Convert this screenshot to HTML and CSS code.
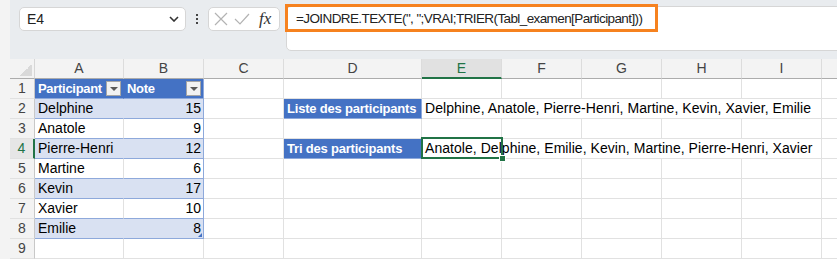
FILE: index.html
```html
<!DOCTYPE html>
<html lang="fr">
<head>
  <meta charset="UTF-8">
  <title>Classeur</title>
  <link rel="stylesheet" href="styles.css">
</head>
<body>
  <div class="app">
    <div class="toolbar">
      <div class="namebox">
        <span>E4</span>
        <svg width="10" height="6" viewBox="0 0 10 6"><polyline points="1,1 5,5 9,1" fill="none" stroke="#333" stroke-width="1.6"/></svg>
      </div>
      <div class="more"><i></i><i></i><i></i></div>
      <div class="fxbox">
        <svg width="14" height="14" viewBox="0 0 14 14"><path d="M1 1 L13 13 M13 1 L1 13" stroke="#b3b3b3" stroke-width="1.2"/></svg>
        <svg width="16" height="14" viewBox="0 0 16 14"><path d="M1 7 L6 12 L15 2" fill="none" stroke="#b3b3b3" stroke-width="1.2"/></svg>
        <span class="fx">fx</span>
      </div>
      <div class="formula">
        <span class="formula-text">=JOINDRE.TEXTE(", ";VRAI;TRIER(Tabl_examen[Participant]))</span>
        <div class="highlight"></div>
      </div>
    </div>

    <div class="sheet">
      <!-- column headers -->
      <div class="corner"><div class="tri"></div></div>
      <div class="ch">A</div><div class="ch">B</div><div class="ch">C</div><div class="ch">D</div>
      <div class="ch ch-sel">E</div><div class="ch">F</div><div class="ch">G</div><div class="ch">H</div>
      <div class="ch">I</div><div class="ch ch-last"></div>

      <!-- row 1 -->
      <div class="rh">1</div>
      <div class="c th">Participant<span class="dd"></span></div>
      <div class="c th th-b">Note<span class="dd"></span></div>
      <div class="c"></div><div class="c"></div><div class="c"></div><div class="c"></div>
      <div class="c"></div><div class="c"></div><div class="c"></div><div class="c j"></div>

      <!-- row 2 -->
      <div class="rh">2</div>
      <div class="c t band">Delphine</div>
      <div class="c t band tb num">15</div>
      <div class="c"></div>
      <div class="c label">Liste des participants</div>
      <div class="c wide">Delphine, Anatole, Pierre-Henri, Martine, Kevin, Xavier, Emilie</div>
      <div class="c j"></div>

      <!-- row 3 -->
      <div class="rh">3</div>
      <div class="c t">Anatole</div>
      <div class="c t tb num">9</div>
      <div class="c"></div><div class="c"></div><div class="c"></div><div class="c"></div>
      <div class="c"></div><div class="c"></div><div class="c"></div><div class="c j"></div>

      <!-- row 4 -->
      <div class="rh rh-sel">4</div>
      <div class="c t band">Pierre-Henri</div>
      <div class="c t band tb num">12</div>
      <div class="c"></div>
      <div class="c label">Tri des participants</div>
      <div class="c wide">Anatole, Delphine, Emilie, Kevin, Martine, Pierre-Henri, Xavier<div class="selection"><span class="handle"></span></div></div>
      <div class="c j"></div>

      <!-- row 5 -->
      <div class="rh">5</div>
      <div class="c t">Martine</div>
      <div class="c t tb num">6</div>
      <div class="c"></div><div class="c"></div><div class="c"></div><div class="c"></div>
      <div class="c"></div><div class="c"></div><div class="c"></div><div class="c j"></div>

      <!-- row 6 -->
      <div class="rh">6</div>
      <div class="c t band">Kevin</div>
      <div class="c t band tb num">17</div>
      <div class="c"></div><div class="c"></div><div class="c"></div><div class="c"></div>
      <div class="c"></div><div class="c"></div><div class="c"></div><div class="c j"></div>

      <!-- row 7 -->
      <div class="rh">7</div>
      <div class="c t">Xavier</div>
      <div class="c t tb num">10</div>
      <div class="c"></div><div class="c"></div><div class="c"></div><div class="c"></div>
      <div class="c"></div><div class="c"></div><div class="c"></div><div class="c j"></div>

      <!-- row 8 -->
      <div class="rh">8</div>
      <div class="c t band">Emilie</div>
      <div class="c t band tb num">8<span class="resize"></span></div>
      <div class="c"></div><div class="c"></div><div class="c"></div><div class="c"></div>
      <div class="c"></div><div class="c"></div><div class="c"></div><div class="c j"></div>

      <!-- row 9 -->
      <div class="rh">9</div>
      <div class="c"></div><div class="c"></div>
      <div class="c"></div><div class="c"></div><div class="c"></div><div class="c"></div>
      <div class="c"></div><div class="c"></div><div class="c"></div><div class="c j"></div>
    </div>
  </div>
</body>
</html>
```

FILE: styles.css
```css
* {
  box-sizing: border-box;
}
body, html {
  margin: 0;
  padding: 0;
  width: 837px;
  height: 259px;
  overflow: hidden;
  background-color: #f3f3f3;
  font-family: "Liberation Sans", Arial, sans-serif;
  color: #000;
}
.app {
  margin-left: 10px;
  width: 827px;
  height: 259px;
  display: flex;
  flex-direction: column;
}
.toolbar {
  height: 59px;
  background-color: #e9ecef;
  display: flex;
  align-items: flex-start;
  padding: 7px 0 0 9px;
  flex-shrink: 0;
}
.namebox {
  width: 167px;
  height: 24px;
  background-color: white;
  border: 1px solid #d6d6d6;
  border-radius: 5px;
  display: flex;
  align-items: center;
  justify-content: space-between;
  padding: 0 6px 0 7px;
  font-size: 14px;
  color: #222;
}
.more {
  width: 22px;
  height: 24px;
  display: flex;
  flex-direction: column;
  align-items: center;
  justify-content: center;
  gap: 2px;
}
.more i {
  width: 2px;
  height: 2px;
  background-color: #444;
}
.fxbox {
  width: 72px;
  height: 24px;
  background-color: white;
  border: 1px solid #d6d6d6;
  border-radius: 5px;
  display: flex;
  align-items: center;
  gap: 6px;
  padding-left: 5px;
}
.fx {
  font-family: "Liberation Serif", serif;
  font-style: italic;
  font-size: 17px;
  color: #333;
  margin-left: 3px;
}
.formula {
  position: relative;
  flex: 1;
  margin: -1px -10px 0 6px;
  height: 45px;
  background-color: white;
  border: 1px solid #d6d6d6;
  border-radius: 5px;
  padding: 2px 0 0 9px;
  font-size: 13.5px;
  letter-spacing: -0.6px;
  line-height: 20px;
  color: #222;
}
.highlight {
  position: absolute;
  left: -2px;
  top: -3px;
  width: 373px;
  height: 28px;
  border: 3px solid #f6821f;
}

/* sheet grid */
.sheet {
  flex: 1;
  background-color: white;
  display: grid;
  grid-template-columns: 25px 89px 80px 80px 138px 80px 80px 80px 80px 80px 15px;
  grid-template-rows: 20px;
  grid-auto-rows: 20px;
  font-size: 14px;
  line-height: 19px;
}
.corner {
  background-color: #f3f3f3;
  border-bottom: 1px solid #acacac;
  border-right: 1px solid #d6d6d6;
  display: flex;
  align-items: flex-end;
  justify-content: flex-end;
  padding: 0 2px 2px 0;
}
.tri {
  width: 12px;
  height: 12px;
  background: linear-gradient(135deg, transparent 50%, #d9d9d9 50%);
}
.ch {
  background-color: #f3f3f3;
  border-bottom: 1px solid #acacac;
  border-right: 1px solid #dcdcdc;
  text-align: center;
  color: #444;
}
.ch-last {
  border-right: none;
}
.ch-sel {
  background-color: #e1e1e1;
  border-bottom: 2px solid #217346;
  color: #217346;
}
.rh {
  background-color: #f3f3f3;
  border-right: 1px solid #c8c8c8;
  border-bottom: 1px solid #e1e1e1;
  text-align: center;
  color: #444;
}
.rh-sel {
  background-color: #e6e6e6;
  border-right: 2px solid #217346;
  color: #217346;
}
.c {
  border-right: 1px solid #e1e1e1;
  border-bottom: 1px solid #e1e1e1;
  padding: 0 3px;
  white-space: nowrap;
}
.j {
  border-right: none;
}
.th {
  position: relative;
  background-color: #4472c4;
  border-right-color: #4472c4;
  border-bottom-color: #8ea9db;
  color: white;
  font-weight: bold;
  font-size: 13px;
  letter-spacing: -0.3px;
}
.th-b {
  border-right-color: #8ea9db;
}
.dd {
  position: absolute;
  right: 2px;
  top: 2px;
  width: 15px;
  height: 15px;
  background-color: #f2f2f2;
  border: 1px solid #a6a6a6;
}
.dd::after {
  content: "";
  position: absolute;
  left: 3px;
  top: 5px;
  border-left: 4px solid transparent;
  border-right: 4px solid transparent;
  border-top: 4px solid #595959;
}
.t {
  border-bottom-color: #8ea9db;
}
.tb {
  border-right-color: #8ea9db;
}
.band {
  background-color: #d9e1f2;
}
.band:not(.tb) {
  border-right-color: #d9e1f2;
}
.num {
  position: relative;
  text-align: right;
  padding-right: 2px;
}
.resize {
  position: absolute;
  right: 1px;
  bottom: 1px;
  border-left: 4px solid transparent;
  border-bottom: 4px solid #4472c4;
}
.label {
  background-color: #4472c4;
  border-right-color: #8ea9db;
  border-bottom-color: #8ea9db;
  color: white;
  font-weight: bold;
  font-size: 13px;
  letter-spacing: -0.2px;
}
.wide {
  grid-column: span 5;
  position: relative;
  letter-spacing: 0.05px;
}
.selection {
  position: absolute;
  left: -1px;
  top: -2px;
  width: 82px;
  height: 22px;
  border: 2px solid #217346;
}
.handle {
  position: absolute;
  right: -5px;
  bottom: -5px;
  width: 7px;
  height: 7px;
  background-color: #217346;
  border: 1px solid white;
}
```
